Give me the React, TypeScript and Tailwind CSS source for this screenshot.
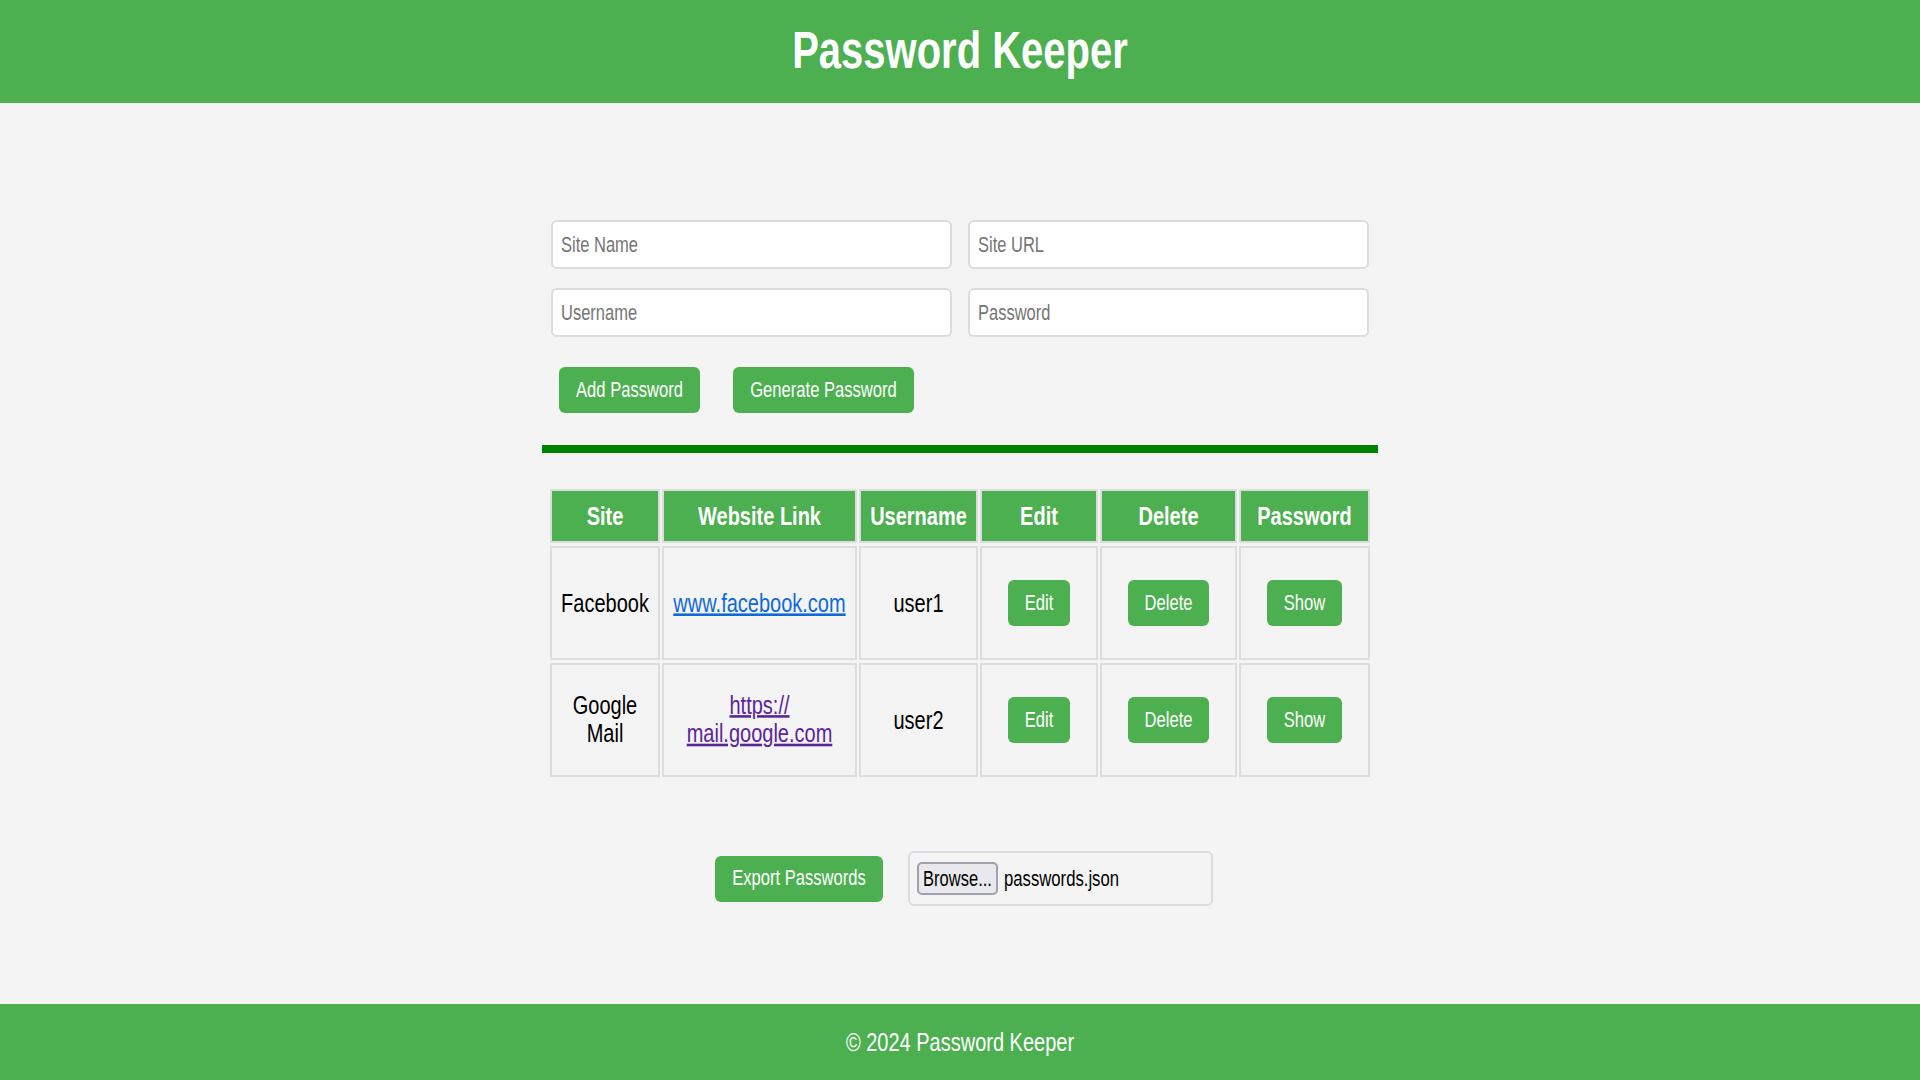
const btn = "h-[46px] rounded-[6px] bg-[#4caf50] text-white text-[16.6px] leading-none pt-[2px]";

function T({ children }: { children: React.ReactNode }) {
  return <span className="inline-block scale-y-[1.3]">{children}</span>;
}

function Row({ site, url, visited, user }: { site: React.ReactNode; url: React.ReactNode; visited?: boolean; user: string }) {
  const td = "border-2 border-[#dddddd] text-center align-middle p-0";
  const lift = visited ? " pb-[2px]" : "";
  return (
    <tr className="h-[114px]">
      <td className={td + lift}><T>{site}</T></td>
      <td className={td + lift}>
        <T><a href="#" className={"underline " + (visited ? "text-[#5b259b]" : "text-[#0f6ad8]")}>{url}</a></T>
      </td>
      <td className={td}><T>{user}</T></td>
      <td className={td}><button className={btn + " w-[62px]"}><T>Edit</T></button></td>
      <td className={td}><button className={btn + " w-[81px]"}><T>Delete</T></button></td>
      <td className={td}><button className={btn + " w-[75px]"}><T>Show</T></button></td>
    </tr>
  );
}

function Field({ label }: { label: string }) {
  return (
    <div className="h-[49px] w-[401px] rounded-[6px] border-2 border-[#dcdcdc] bg-white flex items-center overflow-hidden pb-[2px]">
      <input className="h-[30px] w-full scale-y-[1.3] bg-transparent pl-[8px] text-[16.5px] placeholder:text-[#757575] outline-none" placeholder={label} />
    </div>
  );
}

export default function App() {
  const th = "border-2 border-[#dddddd] bg-[#4caf50] text-white font-bold text-center p-0 text-[20px]";
  return (
    <div className="h-[1080px] flex flex-col bg-[#f4f4f4] text-black overflow-hidden font-['Liberation_Sans',sans-serif] text-[20px] leading-[22px]">
      <header className="h-[103px] shrink-0 bg-[#4caf50] flex items-center justify-center pb-[4px]">
        <h1 className="text-white font-bold text-[40px] leading-none"><T>Password Keeper</T></h1>
      </header>
      <main className="flex-1 w-[836px] mx-auto pt-[117px]">
        <div className="grid grid-cols-[401px_401px] gap-x-[16px] gap-y-[19px] pl-[9px]">
          <Field label="Site Name" />
          <Field label="Site URL" />
          <Field label="Username" />
          <Field label="Password" />
        </div>
        <div className="flex gap-[33px] pl-[17px] mt-[30px]">
          <button className={btn + " w-[141px]"}><T>Add Password</T></button>
          <button className={btn + " w-[181px]"}><T>Generate Password</T></button>
        </div>
        <div className="h-[8px] bg-[#008000] mt-[32px]" />
        <table className="mt-[33px] ml-[6px] w-[824px] table-fixed border-separate border-spacing-x-[2px] border-spacing-y-[3px]">
          <colgroup>
            <col className="w-[110px]" />
            <col className="w-[195px]" />
            <col className="w-[119px]" />
            <col className="w-[118px]" />
            <col className="w-[137px]" />
            <col className="w-[131px]" />
          </colgroup>
          <thead>
            <tr className="h-[54px]">
              <th className={th}><T>Site</T></th>
              <th className={th}><T>Website Link</T></th>
              <th className={th}><T>Username</T></th>
              <th className={th}><T>Edit</T></th>
              <th className={th}><T>Delete</T></th>
              <th className={th}><T>Password</T></th>
            </tr>
          </thead>
          <tbody>
            <Row site="Facebook" url="www.facebook.com" user="user1" />
            <Row site={<>Google<br />Mail</>} url={<>https://<br />mail.google.com</>} visited user="user2" />
          </tbody>
        </table>
        <div className="flex items-center mt-[71px] pl-[173px] gap-[25px]">
          <button className={btn + " w-[168px]"}><T>Export Passwords</T></button>
          <div className="w-[305px] h-[55px] rounded-[6px] border-2 border-[#dcdce0] flex items-center pl-[7px] gap-[6px] text-[16.7px]">
            <button className="w-[81px] h-[33px] rounded-[5px] border-2 border-[#a0a0ae] bg-[#e9e9ed] text-black text-[16.5px] leading-none"><T>Browse...</T></button>
            <T>passwords.json</T>
          </div>
        </div>
      </main>
      <footer className="h-[76px] shrink-0 bg-[#4caf50] text-white flex items-center justify-center text-[20px]"><T>© 2024 Password Keeper</T></footer>
    </div>
  );
}
